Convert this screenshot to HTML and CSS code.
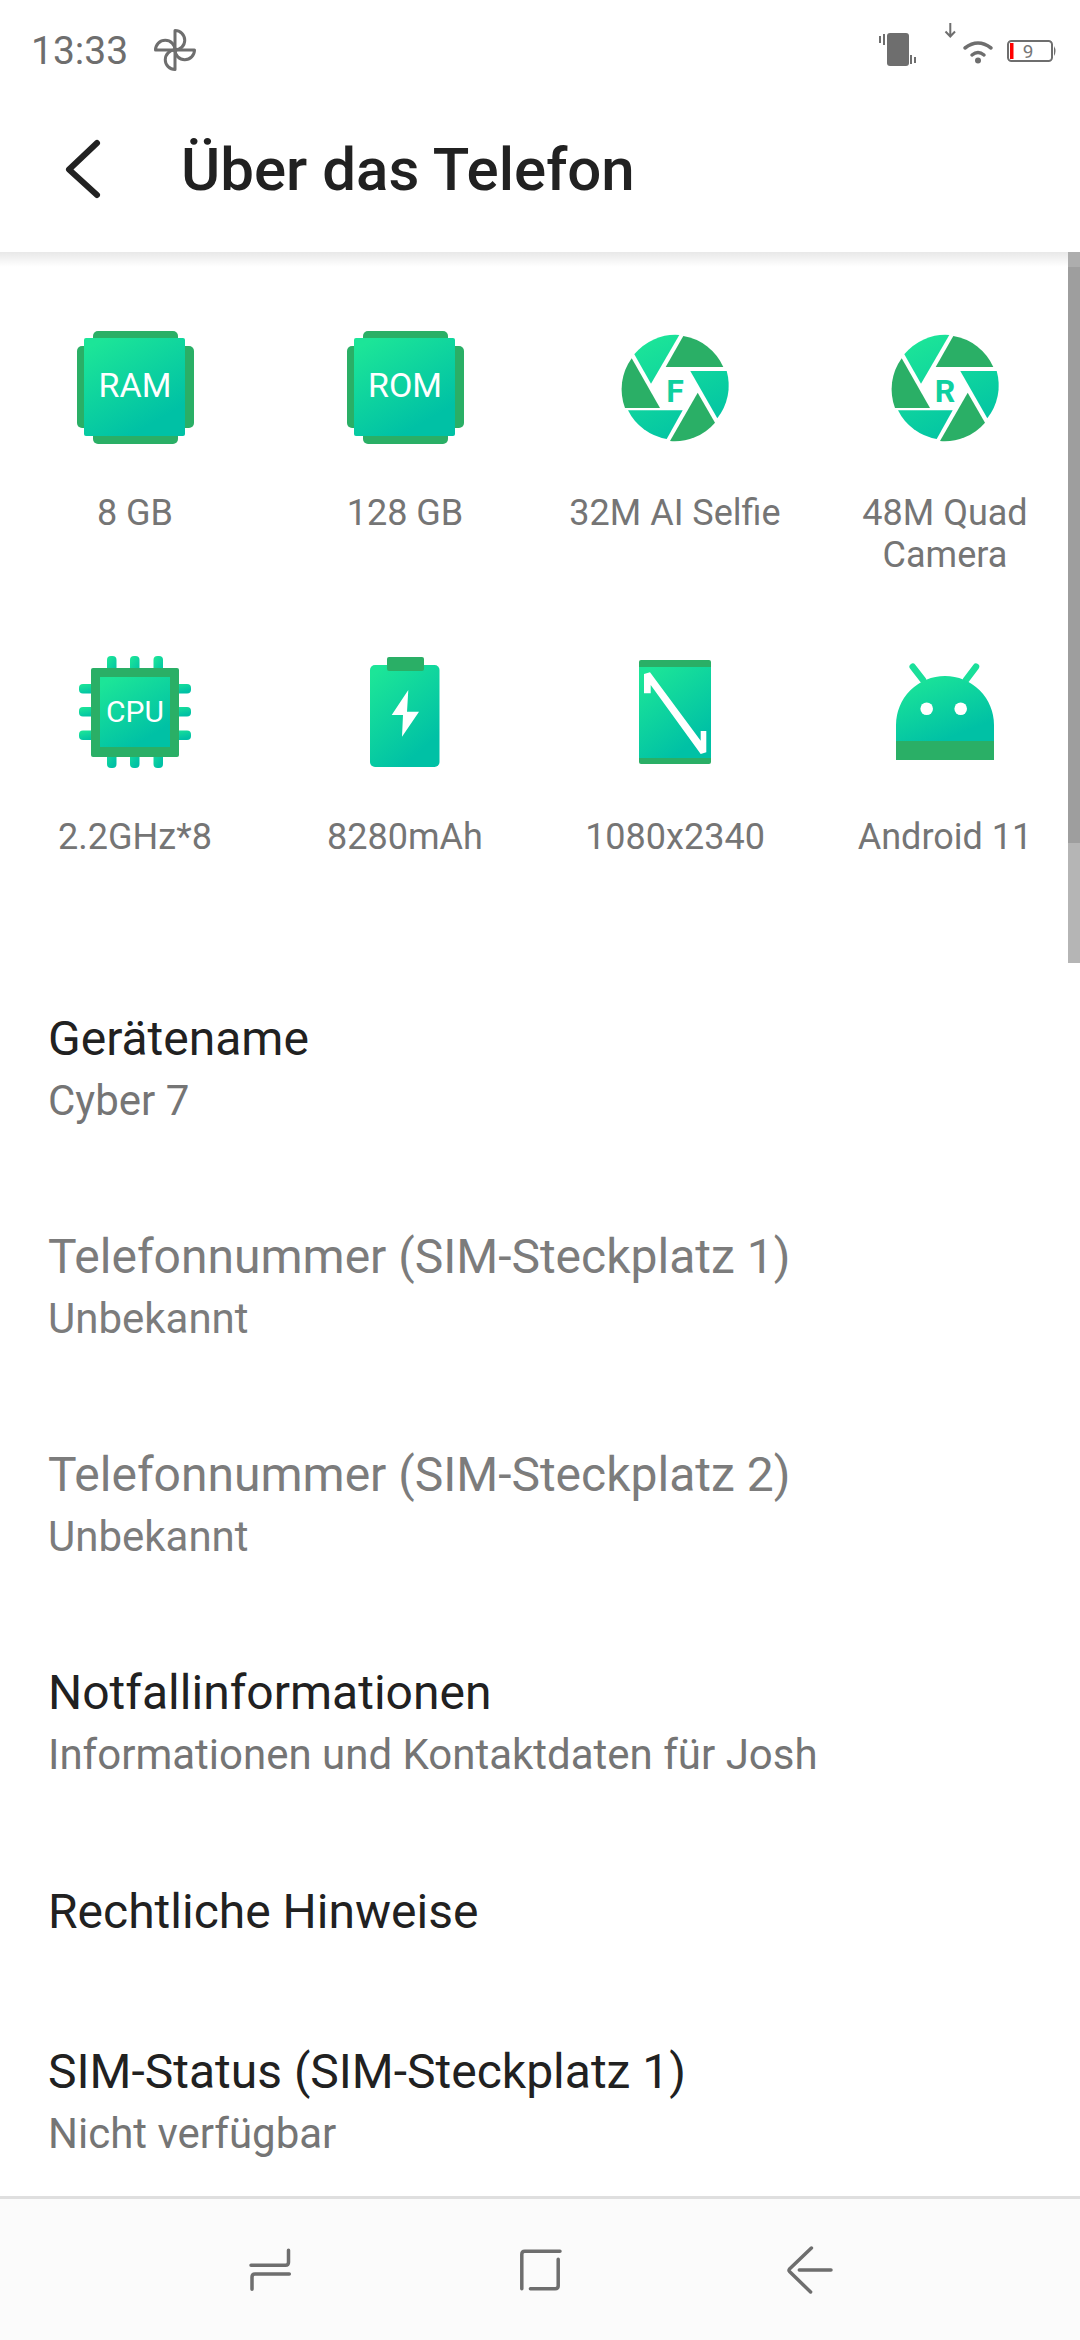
FILE: index.html
```html
<!DOCTYPE html>
<html lang="de">
<head>
    <meta charset="UTF-8">
    <meta name="viewport" content="width=device-width, initial-scale=1.0">
    <title>Über das Telefon</title>
    <link rel="stylesheet" href="styles.css">
</head>
<body>
    <!-- gradients used by all the spec icons -->
    <svg class="defs" width="0" height="0">
        <defs>
            <linearGradient id="verlauf" x1="0.2" y1="0" x2="0.8" y2="1">
                <stop offset="0" stop-color="#1ce598"/>
                <stop offset="0.85" stop-color="#00c1a5"/>
            </linearGradient>
            <linearGradient id="blende" gradientUnits="userSpaceOnUse" x1="35" y1="8" x2="85" y2="112">
                <stop offset="0" stop-color="#1ce598"/>
                <stop offset="1" stop-color="#00c1a5"/>
            </linearGradient>
        </defs>
    </svg>

    <div class="telefon">
        <header class="statusleiste">
            <div class="status-links">
                <span class="uhrzeit">13:33</span>
                <svg class="windrad" width="44" height="44" viewBox="0 0 44 44">
                    <path d="M22 22V2.5a9.75 9.75 0 0 1 0 19.5Z"/>
                    <path d="M22 22H41.5a9.75 9.75 0 0 1-19.5 0Z"/>
                    <path d="M22 22V41.5a9.75 9.75 0 0 1 0-19.5Z"/>
                    <path d="M22 22H2.5a9.75 9.75 0 0 1 19.5 0Z"/>
                </svg>
            </div>
            <svg class="status-rechts" width="200" height="72" viewBox="0 0 200 72">
                <rect class="voll" x="15" y="33" width="22" height="33" rx="3"/>
                <path class="strich" d="M8 36V43M12 34V45M39 55V64M43 57V63"/>
                <path class="strich" d="M78.3 23V36M73.5 31.5L78.3 36.5L83 31.5"/>
                <path class="wlan" d="M93 48Q106 38 119 48M100 55Q106 50 112 55"/>
                <circle class="voll" cx="106" cy="60.5" r="3"/>
                <rect class="akku" x="136" y="41" width="44" height="20" rx="3.5"/>
                <rect x="138" y="43" width="3.5" height="16" fill="#ff0000"/>
                <path class="voll" d="M182 46Q185 51 182 56Z"/>
                <text class="akku-zahl" x="156" y="58">9</text>
            </svg>
        </header>

        <div class="kopf">
            <svg class="zurueck" width="60" height="72" viewBox="0 0 60 72">
                <path d="M33 10L5 36.5L33 62"/>
            </svg>
            <h1>Über das Telefon</h1>
        </div>

        <main class="inhalt">
            <section class="daten">
                <div class="datum">
                    <svg width="120" height="120" viewBox="0 0 120 120">
                        <rect class="dunkel" x="18" y="3" width="85" height="113" rx="5"/>
                        <rect class="dunkel" x="2" y="18" width="117" height="82" rx="5"/>
                        <rect class="hell" x="9" y="10" width="101" height="98" rx="2"/>
                        <text class="chip-text" x="60" y="69">RAM</text>
                    </svg>
                    <p>8 GB</p>
                </div>
                <div class="datum">
                    <svg width="120" height="120" viewBox="0 0 120 120">
                        <rect class="dunkel" x="18" y="3" width="85" height="113" rx="5"/>
                        <rect class="dunkel" x="2" y="18" width="117" height="82" rx="5"/>
                        <rect class="hell" x="9" y="10" width="101" height="98" rx="2"/>
                        <text class="chip-text" x="60" y="69">ROM</text>
                    </svg>
                    <p>128 GB</p>
                </div>
                <div class="datum">
                    <svg width="120" height="120" viewBox="0 0 120 120">
                        <path class="dunkel" d="M68.3 8A53 53 0 0 1 108.3 39H50.7Z"/>
                        <path class="blende" d="M75.3 43H111.7A53 53 0 0 1 102.3 90.3Z"/>
                        <path class="dunkel" d="M82.7 64.7L100 94.7A53 53 0 0 1 55 113Z"/>
                        <path class="blende" d="M67.7 82.3L51.7 111A53 53 0 0 1 13 82.3Z"/>
                        <path class="dunkel" d="M16.7 30.3A53 53 0 0 0 10 80H45Z"/>
                        <path class="blende" d="M36 55.7L19.3 26.3A53 53 0 0 1 64.3 7Z"/>
                        <text class="blende-text" x="60" y="74">F</text>
                    </svg>
                    <p>32M AI Selfie</p>
                </div>
                <div class="datum">
                    <svg width="120" height="120" viewBox="0 0 120 120">
                        <path class="dunkel" d="M68.3 8A53 53 0 0 1 108.3 39H50.7Z"/>
                        <path class="blende" d="M75.3 43H111.7A53 53 0 0 1 102.3 90.3Z"/>
                        <path class="dunkel" d="M82.7 64.7L100 94.7A53 53 0 0 1 55 113Z"/>
                        <path class="blende" d="M67.7 82.3L51.7 111A53 53 0 0 1 13 82.3Z"/>
                        <path class="dunkel" d="M16.7 30.3A53 53 0 0 0 10 80H45Z"/>
                        <path class="blende" d="M36 55.7L19.3 26.3A53 53 0 0 1 64.3 7Z"/>
                        <text class="blende-text" x="60" y="74">R</text>
                    </svg>
                    <p>48M Quad Camera</p>
                </div>
                <div class="datum">
                    <svg width="120" height="120" viewBox="0 0 120 120">
                        <g class="hell">
                            <rect x="32" y="4" width="9.5" height="24" rx="4"/>
                            <rect x="55" y="4" width="9.5" height="24" rx="4"/>
                            <rect x="78.5" y="4" width="9.5" height="24" rx="4"/>
                            <rect x="32" y="92" width="9.5" height="24" rx="4"/>
                            <rect x="55" y="92" width="9.5" height="24" rx="4"/>
                            <rect x="78.5" y="92" width="9.5" height="24" rx="4"/>
                            <rect x="4" y="32" width="24" height="9.5" rx="4"/>
                            <rect x="4" y="55" width="24" height="9.5" rx="4"/>
                            <rect x="4" y="78.5" width="24" height="9.5" rx="4"/>
                            <rect x="92" y="32" width="24" height="9.5" rx="4"/>
                            <rect x="92" y="55" width="24" height="9.5" rx="4"/>
                            <rect x="92" y="78.5" width="24" height="9.5" rx="4"/>
                        </g>
                        <rect class="dunkel" x="16" y="16" width="88" height="89" rx="2"/>
                        <rect class="hell" x="25" y="25" width="70" height="70"/>
                        <text class="cpu-text" x="60" y="70">CPU</text>
                    </svg>
                    <p>2.2GHz*8</p>
                </div>
                <div class="datum">
                    <svg width="120" height="120" viewBox="0 0 120 120">
                        <rect class="hell" x="25" y="13" width="69.5" height="102" rx="5"/>
                        <rect class="dunkel" x="42" y="5" width="37" height="14" rx="2"/>
                        <path class="weiss" d="M63.3 38L46.7 63H58L57 84.7L74 59.7H62Z"/>
                    </svg>
                    <p>8280mAh</p>
                </div>
                <div class="datum">
                    <svg width="120" height="120" viewBox="0 0 120 120">
                        <rect class="dunkel" x="24" y="8" width="72" height="104" rx="2"/>
                        <rect class="hell" x="24" y="15" width="72" height="91"/>
                        <path class="weiss" d="M29 22L35 20.3L85.7 88.7V79H91.3V100.3L85.7 102L35.7 33V41.3H29Z"/>
                    </svg>
                    <p>1080x2340</p>
                </div>
                <div class="datum">
                    <svg width="120" height="120" viewBox="0 0 120 120">
                        <path class="antenne" d="M27.7 14.7L38 28M91 14.7L81 28"/>
                        <path class="hell" d="M11 89V73A49 49 0 0 1 109 73V89Z"/>
                        <rect class="dunkel" x="11" y="89" width="98" height="19"/>
                        <circle class="weiss" cx="41.7" cy="56.7" r="6.3"/>
                        <circle class="weiss" cx="75.7" cy="56.7" r="6.3"/>
                    </svg>
                    <p>Android 11</p>
                </div>
            </section>

            <section class="liste">
                <div class="zeile">
                    <h2>Gerätename</h2>
                    <p>Cyber 7</p>
                </div>
                <div class="zeile aus">
                    <h2>Telefonnummer (SIM-Steckplatz 1)</h2>
                    <p>Unbekannt</p>
                </div>
                <div class="zeile aus">
                    <h2>Telefonnummer (SIM-Steckplatz 2)</h2>
                    <p>Unbekannt</p>
                </div>
                <div class="zeile">
                    <h2>Notfallinformationen</h2>
                    <p>Informationen und Kontaktdaten für Josh</p>
                </div>
                <div class="zeile einzeilig">
                    <h2>Rechtliche Hinweise</h2>
                </div>
                <div class="zeile">
                    <h2>SIM-Status (SIM-Steckplatz 1)</h2>
                    <p>Nicht verfügbar</p>
                </div>
            </section>

            <div class="scrollbalken"></div>
        </main>

        <nav class="navleiste">
            <svg width="60" height="60" viewBox="0 0 60 60">
                <path d="M48.5 10.3V22.3Q48.5 25.3 45.5 25.3H11M49.3 34H15Q12 34 12 37V49.3"/>
            </svg>
            <svg width="60" height="60" viewBox="0 0 60 60">
                <path d="M50 11.3H14.8Q11.8 11.3 11.8 14.3V48.7M48.2 19.3V45.7Q48.2 48.7 45.2 48.7H20.4"/>
            </svg>
            <svg width="60" height="60" viewBox="0 0 60 60">
                <path d="M31.4 8L9.5 29Q8.5 30.3 9.5 31.5L30.6 52M19.3 30H51"/>
            </svg>
        </nav>
    </div>
</body>
</html>
```
FILE: styles.css
```css
* {
    box-sizing: border-box;
}

body {
    margin: 0;
    background-color: #ffffff;
    font-family: Roboto, "Noto Sans", sans-serif;
}

.defs {
    position: absolute;
}

.telefon {
    display: flex;
    flex-direction: column;
    width: 1080px;
    height: 2340px;
    overflow: hidden;
}

/* status bar */
.statusleiste {
    display: flex;
    justify-content: space-between;
    flex: none;
    height: 72px;
    padding-right: 8px;
}

.status-links {
    display: flex;
    align-items: center;
    gap: 25px;
    padding: 30px 0 0 31px;
    height: 72px;
}

.uhrzeit {
    color: #6e6e6e;
    font-size: 39px;
}

.windrad {
    margin-top: -2px;
}

.windrad path {
    fill: none;
    stroke: #6e6e6e;
    stroke-width: 3;
    stroke-linejoin: round;
}

.voll {
    fill: #6e6e6e;
}

.strich {
    fill: none;
    stroke: #6e6e6e;
    stroke-width: 2;
}

.wlan {
    fill: none;
    stroke: #6e6e6e;
    stroke-width: 3.5;
    stroke-linecap: round;
}

.akku {
    fill: none;
    stroke: #6e6e6e;
    stroke-width: 2;
}

.akku-zahl {
    fill: #777777;
    font-size: 19px;
    text-anchor: middle;
}

/* title bar */
.kopf {
    display: flex;
    align-items: center;
    flex: none;
    height: 180px;
    padding: 14px 0 0 64px;
    background-color: #ffffff;
}

.zurueck path {
    fill: none;
    stroke: #222222;
    stroke-width: 6;
    stroke-linecap: round;
    stroke-linejoin: round;
}

.kopf h1 {
    margin: 0 0 0 57px;
    color: #212121;
    font-size: 60px;
    font-weight: 500;
}

/* spec grid */
.inhalt {
    flex: 1;
    position: relative;
    overflow: hidden;
}

/* shadow under the title bar */
.inhalt::before {
    content: "";
    position: absolute;
    top: 0;
    left: 0;
    right: 0;
    height: 15px;
    background: linear-gradient(rgba(0, 0, 0, 0.09), rgba(0, 0, 0, 0));
}

.daten {
    display: grid;
    grid-template-columns: repeat(4, 270px);
    grid-template-rows: 324px 308px;
    padding-top: 76px;
}

.datum {
    display: flex;
    flex-direction: column;
    align-items: center;
}

.datum p {
    margin: 44px 0 0;
    width: 260px;
    color: #757575;
    font-size: 36px;
    line-height: 42px;
    text-align: center;
}

.dunkel {
    fill: #2aaf66;
}

.hell {
    fill: url(#verlauf);
}

.blende {
    fill: url(#blende);
}

.weiss {
    fill: #ffffff;
}

.antenne {
    fill: none;
    stroke: #1adf9a;
    stroke-width: 6.5;
    stroke-linecap: round;
}

.chip-text {
    fill: #ffffff;
    font-size: 34px;
    text-anchor: middle;
}

.cpu-text {
    fill: #ffffff;
    font-size: 30px;
    text-anchor: middle;
}

.blende-text {
    fill: #0fd09f;
    font-size: 32px;
    font-weight: 700;
    text-anchor: middle;
}

/* settings list */
.zeile {
    display: flex;
    flex-direction: column;
    justify-content: center;
    height: 218px;
    padding: 2px 0 0 48px;
}

.einzeilig {
    height: 161px;
    padding: 0 0 2px 48px;
}

.zeile h2 {
    margin: 0;
    color: #212121;
    font-size: 48px;
    font-weight: 400;
    line-height: 60px;
}

.zeile p {
    margin: 2px 0 0;
    color: #757575;
    font-size: 42px;
    line-height: 60px;
}

.aus h2 {
    color: #7c7c7c;
}

.aus p {
    color: #7c7c7c;
}

.scrollbalken {
    position: absolute;
    top: 0;
    right: 0;
    width: 12px;
    height: 711px;
    background: linear-gradient(#adadad 15px, #9e9e9e 15px, #9e9e9e 591px, #b5b5b5 591px);
}

/* bottom navigation */
.navleiste {
    display: flex;
    justify-content: center;
    align-items: center;
    gap: 210px;
    flex: none;
    height: 144px;
    border-top: 3px solid #dfdfdf;
    background-color: #fbfbfb;
}

.navleiste path {
    fill: none;
    stroke: #6e6e6e;
    stroke-width: 3.5;
    stroke-linecap: round;
    stroke-linejoin: round;
}
```
